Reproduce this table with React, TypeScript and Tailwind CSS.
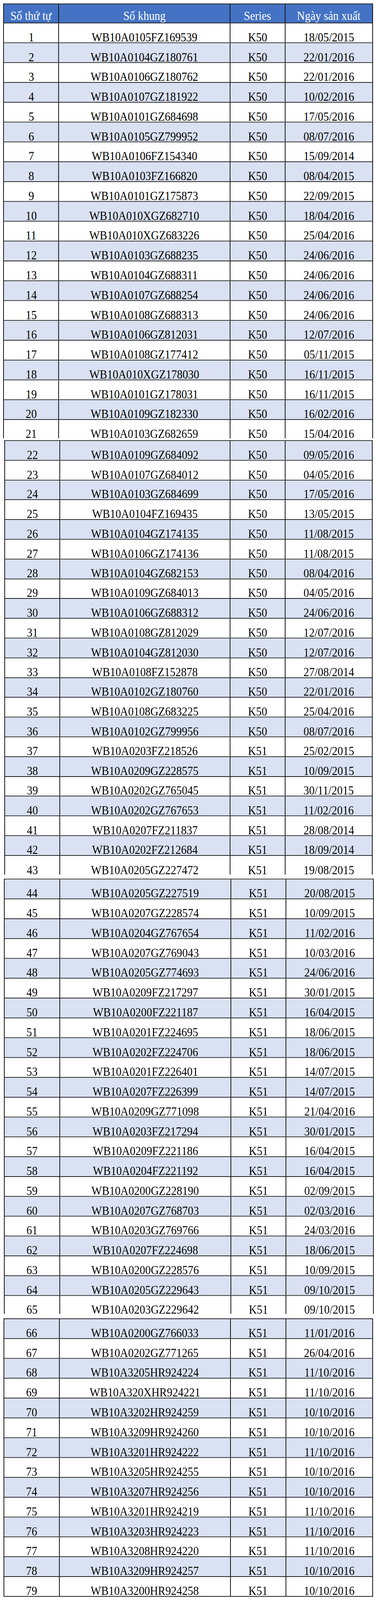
import React from 'react';

type Item = [string, string, string];

const items: Item[] = [
  ['WB10A0105FZ169539', 'K50', '18/05/2015'],
  ['WB10A0104GZ180761', 'K50', '22/01/2016'],
  ['WB10A0106GZ180762', 'K50', '22/01/2016'],
  ['WB10A0107GZ181922', 'K50', '10/02/2016'],
  ['WB10A0101GZ684698', 'K50', '17/05/2016'],
  ['WB10A0105GZ799952', 'K50', '08/07/2016'],
  ['WB10A0106FZ154340', 'K50', '15/09/2014'],
  ['WB10A0103FZ166820', 'K50', '08/04/2015'],
  ['WB10A0101GZ175873', 'K50', '22/09/2015'],
  ['WB10A010XGZ682710', 'K50', '18/04/2016'],
  ['WB10A010XGZ683226', 'K50', '25/04/2016'],
  ['WB10A0103GZ688235', 'K50', '24/06/2016'],
  ['WB10A0104GZ688311', 'K50', '24/06/2016'],
  ['WB10A0107GZ688254', 'K50', '24/06/2016'],
  ['WB10A0108GZ688313', 'K50', '24/06/2016'],
  ['WB10A0106GZ812031', 'K50', '12/07/2016'],
  ['WB10A0108GZ177412', 'K50', '05/11/2015'],
  ['WB10A010XGZ178030', 'K50', '16/11/2015'],
  ['WB10A0101GZ178031', 'K50', '16/11/2015'],
  ['WB10A0109GZ182330', 'K50', '16/02/2016'],
  ['WB10A0103GZ682659', 'K50', '15/04/2016'],
  ['WB10A0109GZ684092', 'K50', '09/05/2016'],
  ['WB10A0107GZ684012', 'K50', '04/05/2016'],
  ['WB10A0103GZ684699', 'K50', '17/05/2016'],
  ['WB10A0104FZ169435', 'K50', '13/05/2015'],
  ['WB10A0104GZ174135', 'K50', '11/08/2015'],
  ['WB10A0106GZ174136', 'K50', '11/08/2015'],
  ['WB10A0104GZ682153', 'K50', '08/04/2016'],
  ['WB10A0109GZ684013', 'K50', '04/05/2016'],
  ['WB10A0106GZ688312', 'K50', '24/06/2016'],
  ['WB10A0108GZ812029', 'K50', '12/07/2016'],
  ['WB10A0104GZ812030', 'K50', '12/07/2016'],
  ['WB10A0108FZ152878', 'K50', '27/08/2014'],
  ['WB10A0102GZ180760', 'K50', '22/01/2016'],
  ['WB10A0108GZ683225', 'K50', '25/04/2016'],
  ['WB10A0102GZ799956', 'K50', '08/07/2016'],
  ['WB10A0203FZ218526', 'K51', '25/02/2015'],
  ['WB10A0209GZ228575', 'K51', '10/09/2015'],
  ['WB10A0202GZ765045', 'K51', '30/11/2015'],
  ['WB10A0202GZ767653', 'K51', '11/02/2016'],
  ['WB10A0207FZ211837', 'K51', '28/08/2014'],
  ['WB10A0202FZ212684', 'K51', '18/09/2014'],
  ['WB10A0205GZ227472', 'K51', '19/08/2015'],
  ['WB10A0205GZ227519', 'K51', '20/08/2015'],
  ['WB10A0207GZ228574', 'K51', '10/09/2015'],
  ['WB10A0204GZ767654', 'K51', '11/02/2016'],
  ['WB10A0207GZ769043', 'K51', '10/03/2016'],
  ['WB10A0205GZ774693', 'K51', '24/06/2016'],
  ['WB10A0209FZ217297', 'K51', '30/01/2015'],
  ['WB10A0200FZ221187', 'K51', '16/04/2015'],
  ['WB10A0201FZ224695', 'K51', '18/06/2015'],
  ['WB10A0202FZ224706', 'K51', '18/06/2015'],
  ['WB10A0201FZ226401', 'K51', '14/07/2015'],
  ['WB10A0207FZ226399', 'K51', '14/07/2015'],
  ['WB10A0209GZ771098', 'K51', '21/04/2016'],
  ['WB10A0203FZ217294', 'K51', '30/01/2015'],
  ['WB10A0209FZ221186', 'K51', '16/04/2015'],
  ['WB10A0204FZ221192', 'K51', '16/04/2015'],
  ['WB10A0200GZ228190', 'K51', '02/09/2015'],
  ['WB10A0207GZ768703', 'K51', '02/03/2016'],
  ['WB10A0203GZ769766', 'K51', '24/03/2016'],
  ['WB10A0207FZ224698', 'K51', '18/06/2015'],
  ['WB10A0200GZ228576', 'K51', '10/09/2015'],
  ['WB10A0205GZ229643', 'K51', '09/10/2015'],
  ['WB10A0203GZ229642', 'K51', '09/10/2015'],
  ['WB10A0200GZ766033', 'K51', '11/01/2016'],
  ['WB10A0202GZ771265', 'K51', '26/04/2016'],
  ['WB10A3205HR924224', 'K51', '11/10/2016'],
  ['WB10A320XHR924221', 'K51', '11/10/2016'],
  ['WB10A3202HR924259', 'K51', '10/10/2016'],
  ['WB10A3209HR924260', 'K51', '10/10/2016'],
  ['WB10A3201HR924222', 'K51', '11/10/2016'],
  ['WB10A3205HR924255', 'K51', '10/10/2016'],
  ['WB10A3207HR924256', 'K51', '10/10/2016'],
  ['WB10A3201HR924219', 'K51', '11/10/2016'],
  ['WB10A3203HR924223', 'K51', '11/10/2016'],
  ['WB10A3208HR924220', 'K51', '11/10/2016'],
  ['WB10A3209HR924257', 'K51', '10/10/2016'],
  ['WB10A3200HR924258', 'K51', '10/10/2016'],
];

// the sheet is four screenshots stacked, each one ends on a half-cut row
const segments = [
  { from: 1, to: 21, header: true, box: 'ml-[8px] mt-[9px]', cols: 'grid-cols-[141px_439px_141px_222px]', rowH: 'h-[53px]', cutH: 'h-[49px]' },
  { from: 22, to: 43, header: false, box: 'ml-[11px] mt-[5px]', cols: 'grid-cols-[141px_436px_141px_221px]', rowH: 'h-[52.8px]', cutH: 'h-[50px]' },
  { from: 44, to: 65, header: false, box: 'ml-[10px] mt-[11px]', cols: 'grid-cols-[142px_438px_141px_222px]', rowH: 'h-[53px]', cutH: 'h-[48px]' },
  { from: 66, to: 79, header: false, box: 'ml-[9px] mt-[12px]', cols: 'grid-cols-[142px_438px_142px_220px]', rowH: 'h-[53px]', cutH: '' },
];

const Cell = ({ children, pad }: { children: React.ReactNode; pad: string }) => (
  <div className={`flex items-end justify-center border-r-2 border-[#161616] last:border-r-0 ${pad}`}>
    <span className="inline-block whitespace-nowrap [transform:scaleX(0.89)]">{children}</span>
  </div>
);

type RowProps = { n: number; item: Item; cols: string; rowH: string; cutH: string };

const Row = ({ n, item, cols, rowH, cutH }: RowProps) => {
  const bg = n % 2 === 0 ? 'bg-[#d9e1f2]' : 'bg-white';
  const size = cutH ? cutH : `${rowH} border-b-2 border-[#161616]`;
  const pad = cutH ? 'pb-0' : 'pb-[2px]';
  return (
    <div className={`grid ${cols} ${size} ${bg}`}>
      <Cell pad={pad}>{n}</Cell>
      <Cell pad={pad}>{item[0]}</Cell>
      <Cell pad={pad}>{item[1]}</Cell>
      <Cell pad={pad}>{item[2]}</Cell>
    </div>
  );
};

const App: React.FC = () => {
  return (
    <div className="w-[960px] h-[4096px] overflow-hidden bg-white">
      <div className="h-[4276px] pb-[9px] origin-top [transform:scaleY(0.9579)] text-[32px] leading-[24px] text-black [font-family:'Liberation_Serif','Times_New_Roman',serif]">
        {segments.map((seg) => (
          <div key={seg.from} className={`${seg.box} w-fit border-x-2 border-t-2 border-[#161616]`}>
            {seg.header && (
              <div className={`grid ${seg.cols} h-[51px] bg-[#4472c4] text-white border-b-2 border-[#161616]`}>
                <Cell pad="pb-[6px]">Số thứ tự</Cell>
                <Cell pad="pb-[6px]">Số khung</Cell>
                <Cell pad="pb-[6px]">Series</Cell>
                <Cell pad="pb-[6px]">Ngày sản xuất</Cell>
              </div>
            )}
            {items.slice(seg.from - 1, seg.to).map((item, i) => {
              const n = seg.from + i;
              return (
                <Row
                  key={n}
                  n={n}
                  item={item}
                  cols={seg.cols}
                  rowH={seg.rowH}
                  cutH={n === seg.to ? seg.cutH : ''}
                />
              );
            })}
          </div>
        ))}
      </div>
    </div>
  );
};

export default App;
